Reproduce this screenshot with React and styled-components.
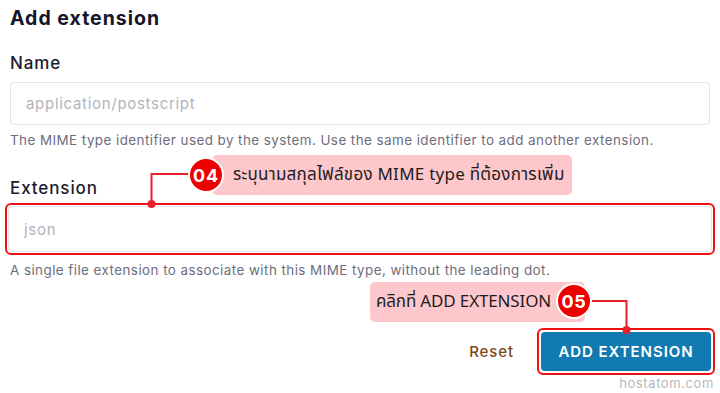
import React from "react";
import styled, { createGlobalStyle } from "styled-components";

const Global = createGlobalStyle`
  html, body { margin: 0; padding: 0; background: #ffffff; }
  body { font-family: Inter, "Open Sans", sans-serif; }
  * { box-sizing: border-box; }
`;

const Page = styled.div`
  position: relative;
  width: 720px;
  height: 393px;
  padding: 6px 10px 0 10px;
  display: flex;
  flex-direction: column;
  overflow: hidden;
`;

const Title = styled.h2`
  margin: 0;
  font-size: 19.5px;
  line-height: 24px;
  font-weight: 700;
  color: #16162a;
  letter-spacing: 1px;
`;

const Field = styled.div`
  display: flex;
  flex-direction: column;
  margin-top: ${(p) => p.$top}px;
`;

const Label = styled.label`
  font-size: 17px;
  line-height: 22px;
  font-weight: 500;
  color: #1b1b2e;
  letter-spacing: 0.9px;
`;

const Input = styled.input`
  width: 100%;
  height: ${(p) => p.$h || 43}px;
  border: 1px solid #e2e2ea;
  border-radius: 4px;
  padding: 0 15px;
  font-family: Inter, "Open Sans", sans-serif;
  font-size: 15px;
  letter-spacing: 0.7px;
  color: #222;
  background: #fff;
  outline: none;
  &::placeholder { color: #b3b3bb; }
`;

const InputSlot = styled.div`
  margin-top: 8px;
`;

const Highlight = styled.div`
  margin: 4px -5px 0 -5px;
  border: 2px solid #ee1111;
  border-radius: 6px;
  padding: 1px;
`;

const Help = styled.p`
  margin: 6px 0 0 0;
  font-size: 13.4px;
  line-height: 18px;
  color: #6d6d7d;
  letter-spacing: 0.45px;
  white-space: nowrap;
`;

const Actions = styled.div`
  margin-top: 49px;
  display: flex;
  justify-content: flex-end;
  align-items: center;
  gap: 23px;
  margin-right: -5px;
`;

const ResetLink = styled.button`
  border: none;
  background: none;
  padding: 0;
  font-family: Inter, "Open Sans", sans-serif;
  font-size: 15px;
  font-weight: 500;
  color: #7d4713;
  letter-spacing: 0.9px;
  cursor: pointer;
`;

const ButtonFrame = styled.div`
  border: 2px solid #ee1111;
  border-radius: 6px;
  padding: 2px;
`;

const Primary = styled.button`
  width: 170px;
  height: 39px;
  border: none;
  border-radius: 4px;
  background: #117ab1;
  color: #ffffff;
  font-family: Inter, "Open Sans", sans-serif;
  font-size: 15px;
  font-weight: 600;
  letter-spacing: 0.95px;
`;

const Watermark = styled.div`
  position: absolute;
  right: 6px;
  bottom: 2px;
  font-size: 13px;
  color: #b9b9b9;
  letter-spacing: 0.6px;
`;

const Bubble = styled.div`
  position: absolute;
  left: ${(p) => p.$x}px;
  top: ${(p) => p.$y}px;
  width: ${(p) => p.$w}px;
  height: 40px;
  background: #fdc7cc;
  border-radius: 5px;
  display: flex;
  align-items: center;
  padding: ${(p) => (p.$left ? "0 0 0 21px" : "0 0 0 6px")};
  font-family: "Noto Sans", "Noto Sans Thai", Tahoma, sans-serif;
  font-size: 17px;
  letter-spacing: ${(p) => p.$ls}px;
  color: #1d1d1d;
  white-space: nowrap;
`;

const Badge = styled.div`
  position: absolute;
  left: ${(p) => p.$cx - 18}px;
  top: ${(p) => p.$cy - 18}px;
  width: 36px;
  height: 36px;
  border-radius: 50%;
  background: #ee0000;
  border: 2px solid #ffffff;
  color: #ffffff;
  display: flex;
  align-items: center;
  justify-content: center;
  font-family: Inter, sans-serif;
  font-weight: 700;
  font-size: 18px;
  letter-spacing: 0.8px;
`;

const Connectors = styled.svg`
  position: absolute;
  left: 0;
  top: 0;
  pointer-events: none;
`;

export default function App() {
  return (
    <>
      <Global />
      <Page>
        <Title>Add extension</Title>

        <Field $top={22}>
          <Label>Name</Label>
          <InputSlot>
            <Input placeholder="application/postscript" $h={43} />
          </InputSlot>
          <Help>
            The MIME type identifier used by the system. Use the same identifier to add another extension.
          </Help>
        </Field>

        <Field $top={28}>
          <Label>Extension</Label>
          <Highlight>
            <Input placeholder="json" $h={46} />
          </Highlight>
          <Help>
            A single file extension to associate with this MIME type, without the leading dot.
          </Help>
        </Field>

        <Actions>
          <ResetLink>Reset</ResetLink>
          <ButtonFrame>
            <Primary>ADD EXTENSION</Primary>
          </ButtonFrame>
        </Actions>

        <Watermark>hostatom.com</Watermark>

        <Connectors width="720" height="393">
          <polyline points="190,174 151.5,174 151.5,204" fill="none" stroke="#e8202b" strokeWidth="2" />
          <circle cx="151.5" cy="204" r="4" fill="#e8202b" />
          <polyline points="592,301 626.5,301 626.5,330" fill="none" stroke="#e8202b" strokeWidth="2" />
          <circle cx="626.5" cy="330" r="4" fill="#e8202b" />
        </Connectors>

        <Bubble $x={212} $y={155} $w={360} $ls={0.25} $left>
          ระบุนามสกุลไฟล์ของ MIME type ที่ต้องการเพิ่ม
        </Bubble>
        <Badge $cx={206} $cy={175}>04</Badge>

        <Bubble $x={370} $y={282} $w={215} $ls={-0.15}>
          คลิกที่ ADD EXTENSION
        </Bubble>
        <Badge $cx={574} $cy={301}>05</Badge>
      </Page>
    </>
  );
}
